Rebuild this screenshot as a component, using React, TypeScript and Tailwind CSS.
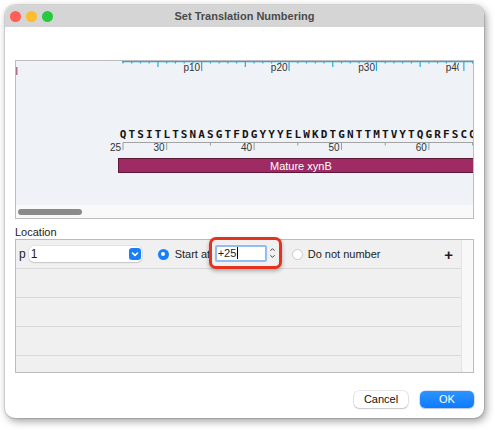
import React from "react";

const SEQ = "QTSITLTSNASGTFDGYYYELWKDTGNTTMTVYTQGRFSCQ";
const STEP = 8.74;
const X0 = 107; // centre of residue 25 / p1 in canvas coordinates

function SequenceCanvas() {
  const topTicks: React.ReactNode[] = [];
  for (let n = 1; n <= 42; n++) {
    const x = X0 + (n - 1) * STEP;
    const len = n % 10 === 0 ? 10 : n % 5 === 0 ? 6 : 2.5;
    topTicks.push(
      <line key={n} x1={x} x2={x} y1={0} y2={len} stroke="#2aa9dc" strokeWidth={1.2} />
    );
  }
  const topLabels = [10, 20, 30, 40].map((n) => {
    const x = X0 + (n - 1) * STEP;
    return (
      <text key={n} x={x - 1.5} y={9.5} textAnchor="end" fontSize={10} fill="#333" fontFamily="'Liberation Sans', Arial, sans-serif">
        p{n}
      </text>
    );
  });

  const bottom: React.ReactNode[] = [];
  for (let p = 25; p <= 66; p++) {
    const x = X0 + (p - 25) * STEP;
    if (p === 25 || p % 10 === 0) {
      bottom.push(<line key={"t" + p} x1={x} x2={x} y1={81.5} y2={89} stroke="#9a9a9a" strokeWidth={1} />);
      bottom.push(
        <text key={"l" + p} x={x - 2} y={89.5} textAnchor="end" fontSize={10} fill="#333" fontFamily="'Liberation Sans', Arial, sans-serif">
          {p}
        </text>
      );
    } else if (p % 5 === 0) {
      bottom.push(<line key={"t" + p} x1={x} x2={x} y1={81.5} y2={84.5} stroke="#9a9a9a" strokeWidth={1} />);
    }
  }

  return (
    <svg width={457} height={144} viewBox="0 0 457 144" className="block shrink-0">
      <defs>
        <clipPath id="topLabelClip">
          <rect x={0} y={0} width={443} height={20} />
        </clipPath>
      </defs>
      {/* left edge marker */}
      <rect x={0} y={6} width={1.5} height={8} fill="#b2708f" />
      {/* protein ruler */}
      <line x1={106} x2={457} y1={0.4} y2={0.4} stroke="#2aa9dc" strokeWidth={1.6} />
      {topTicks}
      <g clipPath="url(#topLabelClip)">{topLabels}</g>
      {/* residues */}
      {SEQ.split("").map((c, i) => (
        <text
          key={i}
          x={X0 + i * STEP}
          y={76.5}
          textAnchor="middle"
          fontSize={11}
          fontWeight="bold"
          fill="#151515"
          fontFamily="'DejaVu Sans Mono', monospace"
        >
          {c}
        </text>
      ))}
      {/* numbering ruler */}
      <line x1={X0} x2={457} y1={81.5} y2={81.5} stroke="#a3a3a3" strokeWidth={1} />
      {bottom}
      {/* feature */}
      <rect x={102.5} y={97.5} width={400} height={14} fill="#9e2b63" stroke="#5c1739" strokeWidth={1} />
      <text x={254} y={108.5} fontSize={11} fill="#ffffff" fontFamily="'Liberation Sans', Arial, sans-serif">
        Mature xynB
      </text>
    </svg>
  );
}

function Chevron({ className }: { className?: string }) {
  return (
    <svg viewBox="0 0 10 10" className={className}>
      <path d="M2.5 4 L5 6.5 L7.5 4" fill="none" stroke="currentColor" strokeWidth={1.6} strokeLinecap="round" strokeLinejoin="round" />
    </svg>
  );
}

export default function App() {
  return (
    <div className="w-[495px] h-[430px] bg-white pt-[5px] pl-[5px] font-['Liberation_Sans',Arial,sans-serif] text-[#1d1d1d]">
      <div className="w-[479px] h-[413px] rounded-[10px] bg-white overflow-hidden flex flex-col shadow-[2px_3px_9px_rgba(0,0,0,0.4)] ring-1 ring-black/10">
        {/* title bar */}
        <div className="h-[22px] shrink-0 bg-[#d5d5d5] grid grid-cols-[1fr_auto_1fr] items-center">
          <div className="flex items-center gap-[5px] pl-[5px]">
            <span className="w-[11px] h-[11px] rounded-full bg-[#fe5f57]" />
            <span className="w-[11px] h-[11px] rounded-full bg-[#febc2e]" />
            <span className="w-[11px] h-[11px] rounded-full bg-[#28c840]" />
          </div>
          <div className="text-[11px] font-bold text-[#4a4a4a] leading-none">Set Translation Numbering</div>
          <div />
        </div>

        <div className="flex flex-col px-[10px]">
          {/* sequence view */}
          <div className="mt-[33px] h-[159px] border border-[#bdbdbd] bg-[#eff2f7] flex flex-col overflow-hidden">
            <SequenceCanvas />
            <div className="flex-1 bg-[#f9f9f9]">
              <div className="ml-[2px] mt-[4px] w-[64px] h-[6px] rounded-full bg-[#8a8a8a]" />
            </div>
          </div>

          <div className="mt-[6px] text-[11px] leading-[14px] text-[#222]">Location</div>

          {/* location table */}
          <div className="h-[134px] border border-[#bcbcbc] bg-[#f0f0f0] flex">
            <div className="flex-1 flex flex-col">
              <div className="h-[29px] shrink-0 border-b border-[#d9d9d9] flex items-center text-[11px]">
                <span className="ml-[3px] text-[12px]">p</span>
                <div className="ml-[3px] w-[113px] h-[16px] bg-white rounded-[5px] flex items-center shadow-[0_0_0_0.5px_rgba(0,0,0,0.12),0_1px_1.5px_rgba(0,0,0,0.12)]">
                  <span className="ml-[2px] text-[12px] flex-1">1</span>
                  <span className="mr-[1px] w-[12px] h-[12px] rounded-[3px] bg-[#1a7ff6] text-white flex items-center justify-center">
                    <Chevron className="w-[10px] h-[10px]" />
                  </span>
                </div>
                <span className="ml-[16px] w-[11px] h-[11px] rounded-full bg-[#1a7ff6] flex items-center justify-center">
                  <span className="w-[4px] h-[4px] rounded-full bg-white" />
                </span>
                <span className="ml-[6px] w-[34px] whitespace-nowrap">Start at</span>
                <div className="relative self-start -mt-[3px] w-[73px] h-[32px] rounded-[7px] border-[3px] border-[#e5321f] bg-[#f0f0f0] shadow-[0_2px_4px_rgba(0,0,0,0.3)] flex items-center pl-[3px]">
                  <div className="w-[52px] h-[17px] bg-white border-2 border-[#92bdf0] rounded-[2px] flex items-center pl-[1px]">
                    <span className="text-[11px]">+25</span>
                    <span className="w-px h-[12px] bg-black ml-[1px]" />
                  </div>
                  <div className="ml-[1px] w-[9px] flex flex-col items-center text-[#444]">
                    <svg viewBox="0 0 8 6" className="w-[7px] h-[5px]">
                      <path d="M1.5 4.5 L4 2 L6.5 4.5" fill="none" stroke="currentColor" strokeWidth={1.2} />
                    </svg>
                    <svg viewBox="0 0 8 6" className="w-[7px] h-[5px] mt-[2px]">
                      <path d="M1.5 1.5 L4 4 L6.5 1.5" fill="none" stroke="currentColor" strokeWidth={1.2} />
                    </svg>
                  </div>
                </div>
                <span className="ml-[10px] w-[11px] h-[11px] rounded-full bg-white border border-[#c9c9c9]" />
                <span className="ml-[5px]">Do not number</span>
                <span className="ml-auto mr-[8px] text-[15px] font-bold leading-none">+</span>
              </div>
              <div className="h-[29px] shrink-0 border-b border-[#d9d9d9]" />
              <div className="h-[29px] shrink-0 border-b border-[#d9d9d9]" />
              <div className="h-[29px] shrink-0 border-b border-[#d9d9d9]" />
              <div className="flex-1" />
            </div>
            <div className="w-[12px] bg-[#f8f8f8] border-l border-[#e3e3e3]" />
          </div>

          {/* buttons */}
          <div className="mt-[18px] flex justify-end gap-[12px]">
            <button className="w-[54px] h-[17px] rounded-[5px] bg-white text-[11px] text-[#111] shadow-[0_0_0_0.5px_rgba(0,0,0,0.18),0_1px_1.5px_rgba(0,0,0,0.15)]">
              Cancel
            </button>
            <button className="w-[54px] h-[17px] rounded-[5px] bg-linear-to-b from-[#2c93ff] to-[#0a7bfd] text-[11px] text-white shadow-[0_0_0_0.5px_rgba(0,80,200,0.3),0_1px_1.5px_rgba(0,0,0,0.15)]">
              OK
            </button>
          </div>
        </div>
      </div>
    </div>
  );
}
